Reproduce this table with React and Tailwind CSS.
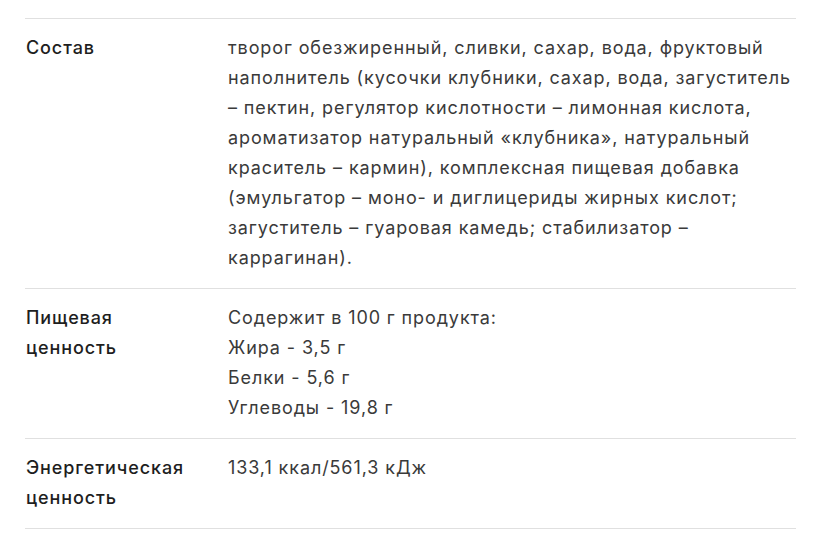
import React from "react";

const ROWS = [
  {
    label: "Состав",
    lines: [
      "творог обезжиренный, сливки, сахар, вода, фруктовый наполнитель (кусочки клубники, сахар, вода, загуститель – пектин, регулятор кислотности – лимонная кислота, ароматизатор натуральный «клубника», натуральный краситель – кармин), комплексная пищевая добавка (эмульгатор – моно- и диглицериды жирных кислот; загуститель – гуаровая камедь; стабилизатор – каррагинан).",
    ],
  },
  {
    label: "Пищевая ценность",
    lines: ["Содержит в 100 г продукта:", "Жира - 3,5 г", "Белки - 5,6 г", "Углеводы - 19,8 г"],
  },
  {
    label: "Энергетическая ценность",
    lines: ["133,1 ккал/561,3 кДж"],
  },
];

export default function App() {
  return (
    <div className="min-h-[556px] bg-white pt-[18px] px-[25px]" style={{ fontFamily: "Inter, 'Noto Sans', sans-serif" }}>
      <div className="w-[771px] border-t border-[#e0e0e0]">
        {ROWS.map((r, i) => (
          <div key={i} className="flex border-b border-[#e0e0e0] pt-[14px] pb-[15px] text-[18px] leading-[30px] tracking-[0.9px]">
            <div className="w-[203px] shrink-0 pl-px">
              <div className="w-[168px] font-medium text-[#1e1e1e]">{r.label}</div>
            </div>
            <div className="flex-1 text-[#3a3a3a]">
              {r.lines.map((l, j) => (
                <div key={j}>{l}</div>
              ))}
            </div>
          </div>
        ))}
      </div>
    </div>
  );
}
